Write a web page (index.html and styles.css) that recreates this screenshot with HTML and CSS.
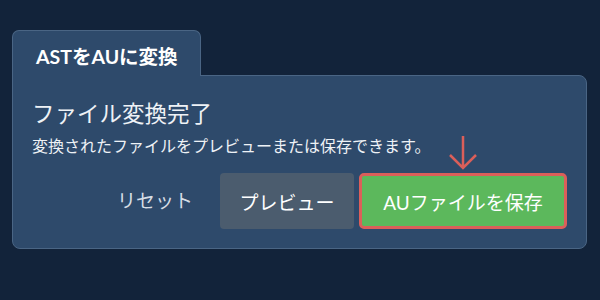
FILE: index.html
```html
<!DOCTYPE html>
<html lang="ja">
  <head>
    <meta charset="UTF-8" />
    <meta name="viewport" content="width=device-width, initial-scale=1.0" />
    <title>ASTをAUに変換</title>
    <link rel="stylesheet" href="styles.css">
  </head>
  <body>
    <div class="wrapper">
      <div class="tab">ASTをAUに変換</div>
      <div class="panel">
        <h2 class="panel-title">ファイル変換完了</h2>
        <p class="panel-text">変換されたファイルをプレビューまたは保存できます。</p>
        <div class="actions">
          <button class="btn btn-link">リセット</button>
          <button class="btn btn-gray">プレビュー</button>
          <div class="save-wrap">
            <!-- hint arrow pointing at the save button -->
            <svg class="arrow" width="30" height="36" viewBox="0 0 30 36">
              <path d="M15 1 V33 M2 20 L15 33 L28 20" fill="none" stroke="#db5f5a" stroke-width="2.5" />
            </svg>
            <button class="btn btn-green">AUファイルを保存</button>
          </div>
        </div>
      </div>
    </div>
  </body>
</html>
```
FILE: styles.css
```css
body {
  font-family: Lato, "Noto Sans CJK JP", sans-serif;
  background-color: #12233a;
  color: #ffffff;
  margin: 0;
  padding: 0;
}
.wrapper {
  padding: 30px 0 0 12px;
  width: 575px;
}
.tab {
  position: relative;
  display: inline-block;
  width: 164px;
  height: 45px;
  padding-left: 23px;
  margin-bottom: -1px;
  background: #2e4a6b;
  border: 1px solid #4a6584;
  border-bottom: none;
  border-radius: 7px 7px 0 0;
  font-size: 19.5px;
  font-weight: bold;
  line-height: 51px;
  z-index: 1;
}
.panel {
  height: 174px;
  padding: 22px 19px 0 19px;
  background: #2e4a6b;
  border: 1px solid #4a6584;
  border-radius: 0 8px 8px 8px;
  box-sizing: border-box;
}
.panel-title {
  margin: 0;
  font-size: 22.5px;
  font-weight: normal;
  line-height: 31px;
  color: #eef2f6;
}
.panel-text {
  margin: 6px 0 0;
  font-size: 16px;
  line-height: 22px;
  color: #eef2f6;
}
.actions {
  display: flex;
  justify-content: flex-end;
  align-items: center;
  gap: 5px;
  margin-top: 16px;
}
.btn {
  font-family: inherit;
  font-size: 19px;
  height: 56px;
  border: none;
  border-radius: 4px;
  color: #ffffff;
  cursor: pointer;
}
.btn-link {
  background: none;
  color: #d6dde5;
  padding: 0 22px 0 0;
  margin-top: -4px;
  height: 45px;
}
.btn-gray {
  width: 134px;
  background-color: #4b5c6e;
}
.save-wrap {
  position: relative;
}
.btn-green {
  width: 208px;
  background-color: #5cb85c;
  border: 3px solid #db5f5a;
  border-radius: 5px;
}
.arrow {
  position: absolute;
  left: 89px;
  top: -38px;
}
```
